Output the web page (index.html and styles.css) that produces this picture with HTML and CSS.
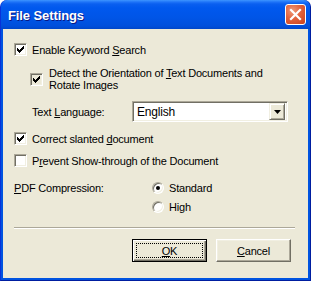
FILE: index.html
```html
<!DOCTYPE html>
<html lang="en">

<head>
    <meta charset="UTF-8">
    <title>File Settings</title>
    <link rel="stylesheet" href="styles.css">
</head>

<body>
    <div class="window">
        <div class="titlebar">
            <span class="title">File Settings</span>
            <span class="close-btn">
                <svg width="13" height="13" viewBox="0 0 13 13">
                    <path d="M2 2 L11 11 M11 2 L2 11" stroke="#fff" stroke-width="2.2" stroke-linecap="square" />
                </svg>
            </span>
        </div>
        <div class="client">
            <label class="check-row row-keyword">
                <span class="checkbox checked"></span>
                <span>Enable Keyword <u>S</u>earch</span>
            </label>
            <label class="check-row row-orient">
                <span class="checkbox checked grey"></span>
                <span class="two-line">Detect the Orientation of <u>T</u>ext Documents and<br>Rotate Images</span>
            </label>
            <div class="lang-row">
                <span class="lang-label">Text <u>L</u>anguage:</span>
                <div class="combo">
                    <span class="combo-text">English</span>
                    <span class="combo-btn">
                        <svg width="7" height="4" viewBox="0 0 7 4"><path d="M0 0 H7 L3.5 4 Z" fill="#000" /></svg>
                    </span>
                </div>
            </div>
            <label class="check-row row-slant">
                <span class="checkbox checked"></span>
                <span>Correct slanted <u>d</u>ocument</span>
            </label>
            <label class="check-row row-show">
                <span class="checkbox"></span>
                <span>P<u>r</u>event Show-through of the Document</span>
            </label>
            <div class="pdf-row">
                <span class="pdf-label"><u>P</u>DF Compression:</span>
                <div class="radios">
                    <label class="radio-row"><span class="radio selected"></span>Standard</label>
                    <label class="radio-row"><span class="radio"></span>High</label>
                </div>
            </div>
            <div class="separator"></div>
            <div class="buttons">
                <button class="btn default"><span class="focus"><u>O</u>K</span></button>
                <button class="btn"><span><u>C</u>ancel</span></button>
            </div>
        </div>
    </div>
</body>

</html>
```

FILE: styles.css
```css
body {
    margin: 0;
    padding: 0;
    font-family: "Liberation Sans", Arial, sans-serif;
    font-size: 11px;
    letter-spacing: -0.2px;
    color: #000;
    background: #fff;
}

.window {
    width: 311px;
    height: 281px;
    background: #0053e0;
    border-radius: 7px 7px 0 0;
    display: flex;
    flex-direction: column;
    box-sizing: border-box;
    border-left: 1px solid #0831d9;
    border-right: 1px solid #001ea0;
    border-bottom: 1px solid #001ea0;
}

.titlebar {
    height: 29px;
    flex: none;
    display: flex;
    align-items: center;
    justify-content: space-between;
    padding: 0 4px 0 7px;
    border-radius: 7px 7px 0 0;
    background: linear-gradient(#3d95ff 0, #1e74f8 2px, #0a5ff0 4px, #0058ee 8px, #0055e7 60%, #004fdb 90%, #0046c8 100%);
}

.title {
    color: #fff;
    font-weight: bold;
    font-size: 13px;
    letter-spacing: -0.1px;
    text-shadow: 1px 1px 0 #0a1883;
    padding-top: 1px;
}

.close-btn {
    width: 19px;
    height: 19px;
    border: 1px solid #fff;
    border-radius: 3px;
    background: radial-gradient(circle at 35% 30%, #ef9a7a 0, #e2623c 45%, #c9401c 100%);
    display: flex;
    align-items: center;
    justify-content: center;
}

.client {
    flex: 1;
    margin: 0 2px 2px 2px;
    background: #ece9d8;
    padding: 0 11px;
    display: flex;
    flex-direction: column;
}

.check-row {
    display: flex;
    align-items: center;
    gap: 5px;
    height: 13px;
}

.row-keyword {
    margin-top: 14px;
}

.row-orient {
    margin-top: 10px;
    margin-left: 16px;
    height: 26px;
    gap: 6px;
}

.two-line {
    line-height: 12px;
}

.row-slant {
    margin-top: 10px;
}

.row-show {
    margin-top: 9px;
}

.checkbox {
    flex: none;
    width: 13px;
    height: 13px;
    box-sizing: border-box;
    background: #fff;
    border-top: 1px solid #aca899;
    border-left: 1px solid #aca899;
    border-right: 1px solid #fff;
    border-bottom: 1px solid #fff;
    box-shadow: inset 1px 1px 0 #716f64, inset -1px -1px 0 #f1efe2;
    position: relative;
}

.checkbox.grey {
    background: #ece9d8;
}

.checkbox.checked::after {
    content: "";
    position: absolute;
    left: 2px;
    top: 2px;
    width: 7px;
    height: 7px;
    background: url("data:image/svg+xml,%3Csvg xmlns='http://www.w3.org/2000/svg' width='7' height='7'%3E%3Cpath d='M0 2h1v1h1v1h1v-1h1v-1h1v-1h1v-1h1v3h-1v1h-1v1h-1v1h-1v1h-1v-1h-1v-1h-1z' fill='%23000'/%3E%3C/svg%3E") no-repeat;
}

.lang-row {
    display: flex;
    align-items: center;
    margin-top: 9px;
    height: 21px;
}

.lang-label {
    margin-left: 18px;
    width: 100px;
}

.combo {
    width: 156px;
    height: 21px;
    box-sizing: border-box;
    background: #fff;
    border-top: 1px solid #aca899;
    border-left: 1px solid #aca899;
    border-right: 1px solid #fff;
    border-bottom: 1px solid #fff;
    box-shadow: inset 1px 1px 0 #716f64, inset -1px -1px 0 #f1efe2;
    display: flex;
    align-items: center;
    justify-content: space-between;
    padding: 2px;
}

.combo-text {
    padding-left: 2px;
    font-size: 12px;
}

.combo-btn {
    width: 16px;
    height: 17px;
    box-sizing: border-box;
    background: #ece9d8;
    border-top: 1px solid #f1efe2;
    border-left: 1px solid #f1efe2;
    border-right: 1px solid #716f64;
    border-bottom: 1px solid #716f64;
    box-shadow: inset 1px 1px 0 #fff, inset -1px -1px 0 #aca899;
    display: flex;
    align-items: center;
    justify-content: center;
}

.pdf-row {
    display: flex;
    margin-top: 14px;
}

.pdf-label {
    width: 138px;
    height: 14px;
    line-height: 14px;
}

.radios {
    display: flex;
    flex-direction: column;
    gap: 5px;
}

.radio-row {
    display: flex;
    align-items: center;
    gap: 5px;
    height: 14px;
}

.radio {
    width: 12px;
    height: 12px;
    box-sizing: border-box;
    border-radius: 50%;
    background: #fff;
    border: 1px solid;
    border-color: #aca899 #fff #fff #aca899;
    box-shadow: inset 1px 1px 0 #716f64, inset -1px -1px 0 #f1efe2;
    display: flex;
    align-items: center;
    justify-content: center;
}

.radio.selected::after {
    content: "";
    width: 4px;
    height: 4px;
    border-radius: 50%;
    background: #000;
}

.separator {
    margin-top: 13px;
    margin-right: 2px;
    height: 1px;
    background: #aca899;
    border-bottom: 1px solid #fff;
}

.buttons {
    display: flex;
    justify-content: flex-end;
    gap: 9px;
    margin-top: 10px;
    margin-right: 6px;
}

.btn {
    width: 75px;
    height: 23px;
    box-sizing: border-box;
    background: #ece9d8;
    font-family: "Liberation Sans", Arial, sans-serif;
    font-size: 11px;
    letter-spacing: -0.2px;
    color: #000;
    padding: 0;
    border-top: 1px solid #fff;
    border-left: 1px solid #fff;
    border-right: 1px solid #716f64;
    border-bottom: 1px solid #716f64;
    box-shadow: inset -1px -1px 0 #aca899, inset 1px 1px 0 #f1efe2;
    display: flex;
    align-items: center;
    justify-content: center;
}

.btn.default {
    border: 1px solid #000;
    box-shadow: inset 1px 1px 0 #fff, inset -1px -1px 0 #716f64, inset -2px -2px 0 #aca899;
    padding: 3px;
}

.focus {
    flex: 1;
    align-self: stretch;
    border: 1px dotted #000;
    display: flex;
    align-items: center;
    justify-content: center;
}
```
